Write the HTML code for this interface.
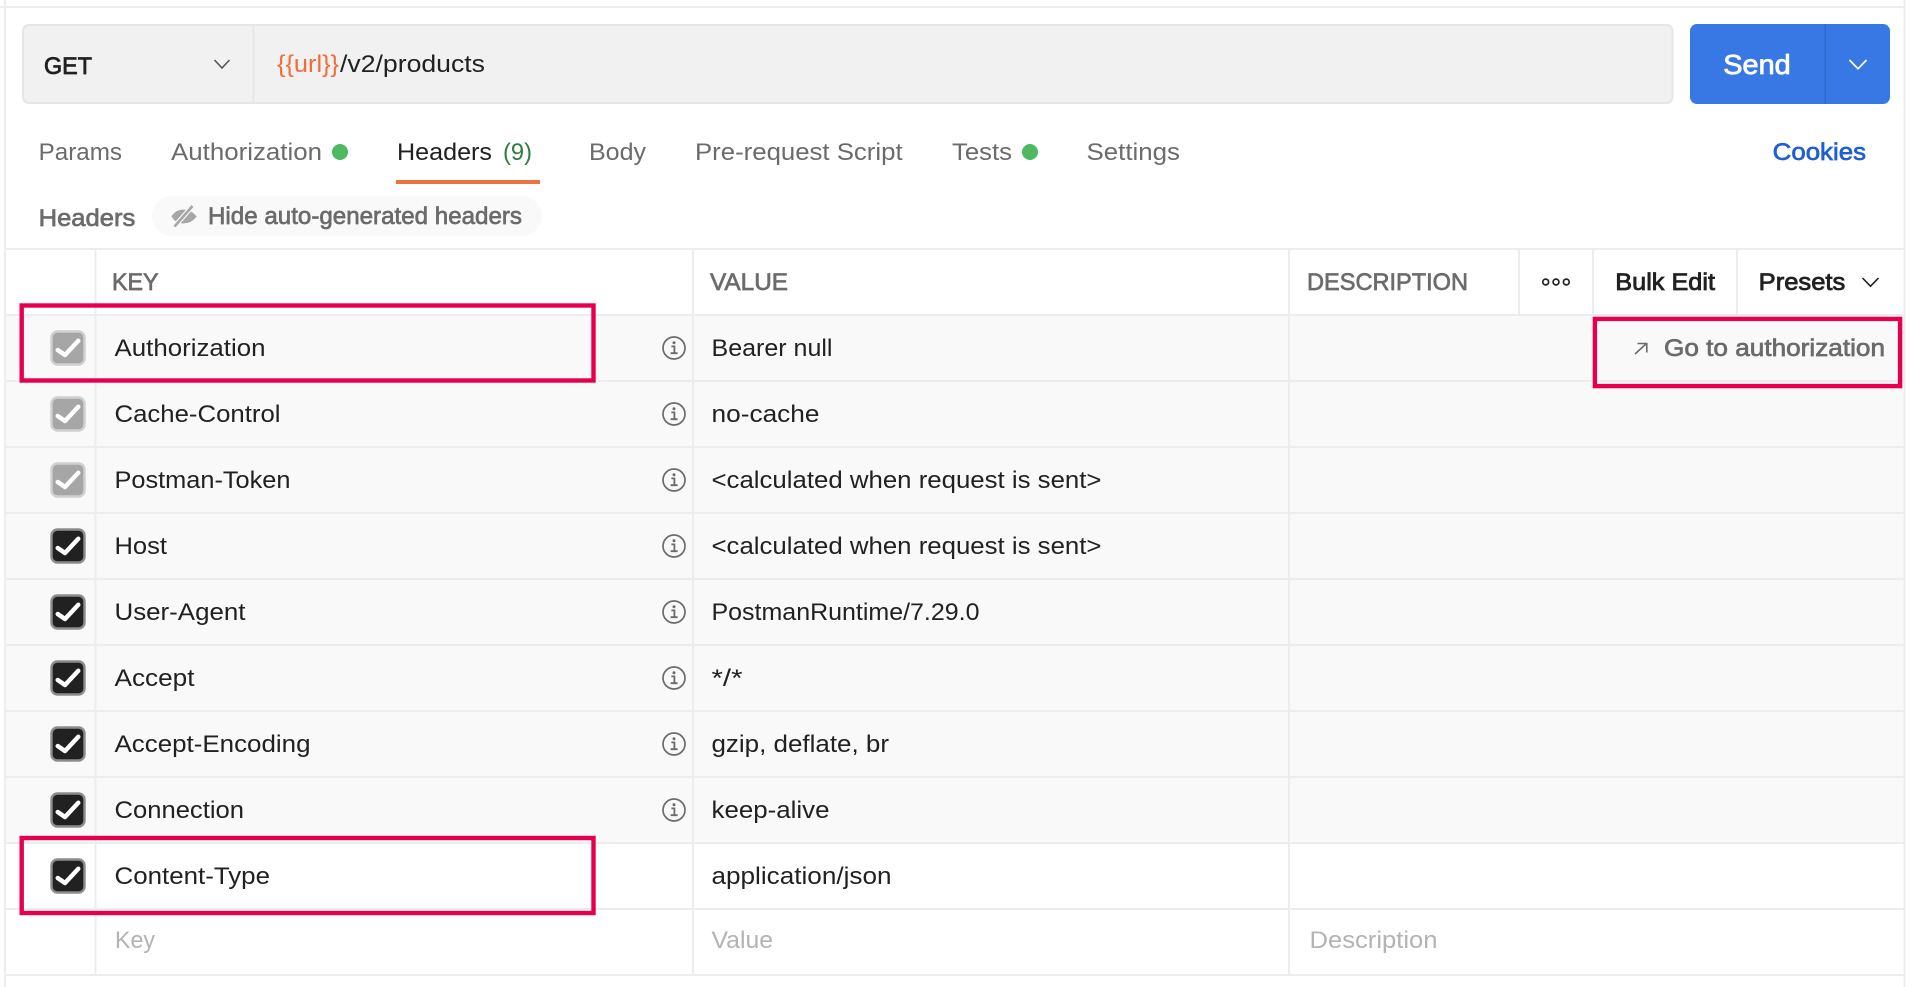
<!DOCTYPE html>
<html><head><meta charset="utf-8"><style>
html,body{margin:0;padding:0;background:#fff;width:1913px;height:987px;overflow:hidden}
svg{display:block}
text{font-family:"Liberation Sans",sans-serif;font-size:24.5px}
.k{fill:#212121}
.g{fill:#6b6b6b}
.p{fill:#b3b3b3}
.gm{fill:#6b6b6b;stroke:#6b6b6b;stroke-width:.7px}
.km{fill:#212121;stroke:#212121;stroke-width:.8px}
</style></head><body>
<svg width="1913" height="987" viewBox="0 0 1913 987" xmlns="http://www.w3.org/2000/svg">
<defs>
<g id="cbl"><rect x="-16.5" y="-16.5" width="33" height="33" rx="6" fill="#a6a6a6" stroke="#d0d0d0" stroke-width="2.4"/><path d="M-10.3 2L-3 7L10.3-7.3" fill="none" stroke="#fff" stroke-width="4.4" stroke-linecap="round" stroke-linejoin="round"/></g>
<g id="cbd"><rect x="-16.5" y="-16.5" width="33" height="33" rx="6" fill="#212121" stroke="#8c8c8c" stroke-width="2.4"/><path d="M-10.3 2L-3 7L10.3-7.3" fill="none" stroke="#fff" stroke-width="4.4" stroke-linecap="round" stroke-linejoin="round"/></g>
<g id="inf"><circle r="11" fill="none" stroke="#6b6b6b" stroke-width="1.7"/><circle cx="0" cy="-5.3" r="1.5" fill="#6b6b6b"/><path d="M-2.6-1.6H.4V5M-3.4 5.2H3.6" fill="none" stroke="#6b6b6b" stroke-width="1.8"/></g>
</defs>
<rect width="1913" height="987" fill="#fff"/>
<!-- outer lines -->
<rect x="0" y="6" width="1905.500" height="2" fill="#ededed"/>
<rect x="4" y="0" width="2" height="987" fill="#ededed"/>
<rect x="1903.500" y="0" width="2" height="987" fill="#ededed"/>
<!-- url bar -->
<rect x="23" y="25" width="1649.500" height="78" rx="6" fill="#f1f1f1" stroke="#e6e6e6" stroke-width="2"/>
<rect x="252.500" y="25" width="2" height="78" fill="#e6e6e6"/>
<text x="44" y="74" textLength="48" lengthAdjust="spacingAndGlyphs" class="km">GET</text>
<path d="M214.500 60L222 68L229.500 60" fill="none" stroke="#555" stroke-width="1.6"/>
<text x="277" y="72" textLength="62" lengthAdjust="spacingAndGlyphs" fill="#f26b3a">{{url}}</text>
<text x="340" y="72" textLength="145" lengthAdjust="spacingAndGlyphs" class="k">/v2/products</text>
<!-- send -->
<rect x="1690" y="24" width="200" height="80" rx="7" fill="#3878e5"/>
<rect x="1824.500" y="24" width="1.500" height="80" fill="#2f6ad0"/>
<text x="1723.300" y="74" textLength="67.400" lengthAdjust="spacingAndGlyphs" style="font-size:27.500px" fill="#fff" stroke="#fff" stroke-width=".8">Send</text>
<path d="M1849.500 60L1858 68.800L1866.500 60" fill="none" stroke="#fff" stroke-width="1.700"/>
<!-- tabs -->
<text x="38.600" y="160" textLength="83.400" lengthAdjust="spacingAndGlyphs" class="g">Params</text>
<text x="171" y="160" textLength="151" lengthAdjust="spacingAndGlyphs" class="g">Authorization</text>
<circle cx="340" cy="152" r="8" fill="#4fb862"/>
<text x="397" y="160" textLength="95" lengthAdjust="spacingAndGlyphs" class="k">Headers</text>
<text x="503" y="160" textLength="29" lengthAdjust="spacingAndGlyphs" fill="#2f7d3f">(9)</text>
<rect x="396" y="180" width="144" height="4" fill="#ea7240"/>
<text x="589" y="160" textLength="57" lengthAdjust="spacingAndGlyphs" class="g">Body</text>
<text x="695" y="160" textLength="207.600" lengthAdjust="spacingAndGlyphs" class="g">Pre-request Script</text>
<text x="952" y="160" textLength="60" lengthAdjust="spacingAndGlyphs" class="g">Tests</text>
<circle cx="1030" cy="152" r="8" fill="#4fb862"/>
<text x="1086.500" y="160" textLength="93.500" lengthAdjust="spacingAndGlyphs" class="g">Settings</text>
<text x="1772.700" y="160" textLength="93.300" lengthAdjust="spacingAndGlyphs" fill="#1f5fd3" stroke="#1f5fd3" stroke-width=".7">Cookies</text>
<!-- subheader -->
<text x="38.600" y="226" textLength="96.700" lengthAdjust="spacingAndGlyphs" class="gm">Headers</text>
<rect x="152" y="196" width="390" height="40" rx="20" fill="#f9f9f9"/>
<g fill="none" stroke="#a6a6a6" stroke-width="2.6">
<path d="M173 216.500C178 209 189 209 195 216.500C189 224 178 224 173 216.500Z" fill="#a6a6a6"/>
<path d="M174.500 226.500L192.500 206" stroke="#f9f9f9" stroke-width="5"/>
<path d="M174.500 226.500L192.500 206"/>
</g>
<text x="208" y="224" textLength="314" lengthAdjust="spacingAndGlyphs" class="gm">Hide auto-generated headers</text>
<!-- rows bg -->
<rect x="6" y="315" width="1897.500" height="528" fill="#f9f9f9"/>
<!-- horizontal lines -->
<g fill="#ededed">
<rect x="6" y="248" width="1897.500" height="2"/>
<rect x="6" y="314" width="1897.500" height="2"/>
<rect x="6" y="380" width="1897.500" height="2"/>
<rect x="6" y="446" width="1897.500" height="2"/>
<rect x="6" y="512" width="1897.500" height="2"/>
<rect x="6" y="578" width="1897.500" height="2"/>
<rect x="6" y="644" width="1897.500" height="2"/>
<rect x="6" y="710" width="1897.500" height="2"/>
<rect x="6" y="776" width="1897.500" height="2"/>
<rect x="6" y="842" width="1897.500" height="2"/>
<rect x="6" y="908" width="1897.500" height="2"/>
<rect x="6" y="974" width="1897.500" height="2"/>
<!-- vertical lines -->
<rect x="94.500" y="249" width="2" height="726"/>
<rect x="692" y="249" width="2" height="726"/>
<rect x="1288" y="249" width="2" height="726"/>
<rect x="1518" y="249" width="2" height="66"/>
<rect x="1592" y="249" width="2" height="66"/>
<rect x="1736" y="249" width="2" height="66"/>
</g>
<!-- table header -->
<text x="112" y="290" textLength="46.600" lengthAdjust="spacingAndGlyphs" class="gm">KEY</text>
<text x="710" y="290" textLength="78" lengthAdjust="spacingAndGlyphs" class="gm">VALUE</text>
<text x="1307" y="290" textLength="161" lengthAdjust="spacingAndGlyphs" class="gm">DESCRIPTION</text>
<g fill="none" stroke="#212121" stroke-width="1.700"><circle cx="1545.700" cy="282" r="2.900"/><circle cx="1556" cy="282" r="2.900"/><circle cx="1566.300" cy="282" r="2.900"/></g>
<text x="1615.300" y="290" textLength="99.700" lengthAdjust="spacingAndGlyphs" class="km">Bulk Edit</text>
<text x="1758.700" y="290" textLength="86.600" lengthAdjust="spacingAndGlyphs" class="km">Presets</text>
<path d="M1862.500 278L1870.500 286.200L1878.500 278" fill="none" stroke="#212121" stroke-width="1.600"/>
<!-- checkboxes -->
<use href="#cbl" x="68" y="348"/><use href="#cbl" x="68" y="414"/><use href="#cbl" x="68" y="480"/>
<use href="#cbd" x="68" y="546"/><use href="#cbd" x="68" y="612"/><use href="#cbd" x="68" y="678"/><use href="#cbd" x="68" y="744"/><use href="#cbd" x="68" y="810"/><use href="#cbd" x="68" y="876"/>
<!-- keys -->
<g class="k">
<text x="114.500" y="356" textLength="151" lengthAdjust="spacingAndGlyphs">Authorization</text>
<text x="114.500" y="422" textLength="166" lengthAdjust="spacingAndGlyphs">Cache-Control</text>
<text x="114.500" y="488" textLength="176" lengthAdjust="spacingAndGlyphs">Postman-Token</text>
<text x="114.500" y="554" textLength="52.500" lengthAdjust="spacingAndGlyphs">Host</text>
<text x="114.500" y="620" textLength="131" lengthAdjust="spacingAndGlyphs">User-Agent</text>
<text x="114.500" y="686" textLength="80" lengthAdjust="spacingAndGlyphs">Accept</text>
<text x="114.500" y="752" textLength="196" lengthAdjust="spacingAndGlyphs">Accept-Encoding</text>
<text x="114.500" y="818" textLength="129.500" lengthAdjust="spacingAndGlyphs">Connection</text>
<text x="114.500" y="884" textLength="155.500" lengthAdjust="spacingAndGlyphs">Content-Type</text>
</g>
<text x="115" y="948" textLength="40" lengthAdjust="spacingAndGlyphs" class="p">Key</text>
<!-- info -->
<use href="#inf" x="674" y="348"/><use href="#inf" x="674" y="414"/><use href="#inf" x="674" y="480"/><use href="#inf" x="674" y="546"/><use href="#inf" x="674" y="612"/><use href="#inf" x="674" y="678"/><use href="#inf" x="674" y="744"/><use href="#inf" x="674" y="810"/>
<!-- values -->
<g class="k">
<text x="711.500" y="356" textLength="121" lengthAdjust="spacingAndGlyphs">Bearer null</text>
<text x="711.500" y="422" textLength="108" lengthAdjust="spacingAndGlyphs">no-cache</text>
<text x="711.500" y="488" textLength="390" lengthAdjust="spacingAndGlyphs">&lt;calculated when request is sent&gt;</text>
<text x="711.500" y="554" textLength="390" lengthAdjust="spacingAndGlyphs">&lt;calculated when request is sent&gt;</text>
<text x="711.500" y="620" textLength="268" lengthAdjust="spacingAndGlyphs">PostmanRuntime/7.29.0</text>
<text x="711.500" y="686" textLength="31" lengthAdjust="spacingAndGlyphs">*/*</text>
<text x="711.500" y="752" textLength="177.500" lengthAdjust="spacingAndGlyphs">gzip, deflate, br</text>
<text x="711.500" y="818" textLength="118" lengthAdjust="spacingAndGlyphs">keep-alive</text>
<text x="711.500" y="884" textLength="180" lengthAdjust="spacingAndGlyphs">application/json</text>
</g>
<text x="711.500" y="948" textLength="61.500" lengthAdjust="spacingAndGlyphs" class="p">Value</text>
<text x="1309.500" y="948" textLength="128" lengthAdjust="spacingAndGlyphs" class="p">Description</text>
<!-- go to auth -->
<path d="M1635 354L1646.500 343.500M1637.500 343.500H1646.800V352.500" fill="none" stroke="#6b6b6b" stroke-width="1.600"/>
<text x="1664" y="356" textLength="221" lengthAdjust="spacingAndGlyphs" class="gm">Go to authorization</text>
<!-- red boxes -->
<g fill="none" stroke="#e6004c" stroke-width="4.400">
<rect x="21.700" y="305.500" width="571.800" height="75"/>
<rect x="21.700" y="838" width="571.800" height="75"/>
<rect x="1594.900" y="318.900" width="305.200" height="67.200"/>
</g>
</svg>
</body></html>
